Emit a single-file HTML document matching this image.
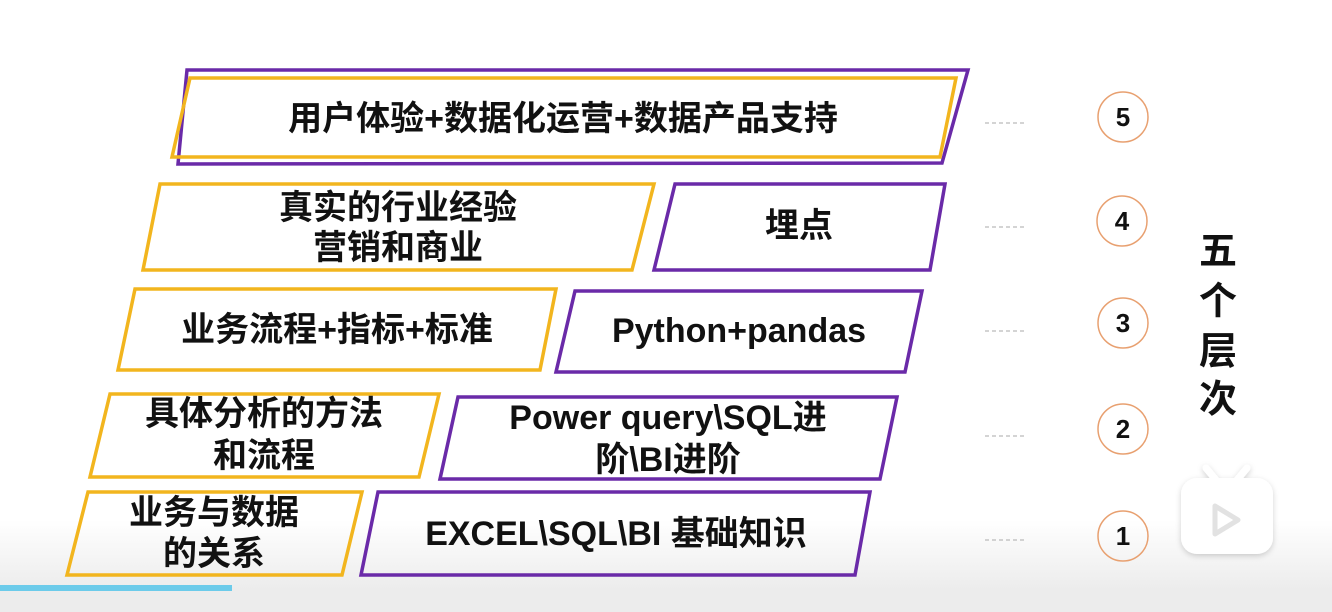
<!DOCTYPE html>
<html><head><meta charset="utf-8"><style>
html,body{margin:0;padding:0;width:1332px;height:612px;overflow:hidden;background:#fff}
svg{position:absolute;left:0;top:0}
text{font-family:"Liberation Sans","Noto Sans CJK SC",sans-serif;font-weight:bold;fill:#111}
</style></head><body>
<svg width="1332" height="612" viewBox="0 0 1332 612">
<defs><linearGradient id="bg" x1="0" y1="0" x2="0" y2="1"><stop offset="0" stop-color="#fff"/><stop offset="1" stop-color="#ececec"/></linearGradient>
<filter id="sh" x="-20%" y="-20%" width="140%" height="140%"><feDropShadow dx="0" dy="2" stdDeviation="3" flood-color="#000" flood-opacity="0.18"/></filter></defs>
<rect x="0" y="520" width="1332" height="70" fill="url(#bg)"/>
<rect x="0" y="590" width="1332" height="22" fill="#ececec"/>
<rect x="0" y="585" width="232" height="6" fill="#6ccbea"/>
<g fill="none" stroke-width="3.5">
<polygon points="187,70 968,70 942,163 178,164" stroke="#6a2aa8"/>
<polygon points="190,78 956,78 940,157 172,157" stroke="#f2b51e"/>
<polygon points="160,184 654,184 632,270 143,270" stroke="#f2b51e"/>
<polygon points="675,184 945,184 930,270 654,270" stroke="#6a2aa8"/>
<polygon points="135,289 556,289 540,370 118,370" stroke="#f2b51e"/>
<polygon points="575,291 922,291 905,372 556,372" stroke="#6a2aa8"/>
<polygon points="110,394 439,394 419,477 90,477" stroke="#f2b51e"/>
<polygon points="458,397 897,397 880,479 440,479" stroke="#6a2aa8"/>
<polygon points="88,492 362,492 342,575 67,575" stroke="#f2b51e"/>
<polygon points="378,492 870,492 855,575 361,575" stroke="#6a2aa8"/>
</g>
<g font-size="34" text-anchor="middle">
<text x="563" y="130">用户体验+数据化运营+数据产品支持</text>
<text x="398" y="219">真实的行业经验</text>
<text x="398" y="259">营销和商业</text>
<text x="799" y="237">埋点</text>
<text x="337" y="341">业务流程+指标+标准</text>
<text x="739" y="342">Python+pandas</text>
<text x="264" y="425">具体分析的方法</text>
<text x="264" y="467">和流程</text>
<text x="668" y="429">Power query\SQL进</text>
<text x="668" y="471">阶\BI进阶</text>
<text x="214" y="524">业务与数据</text>
<text x="214" y="565">的关系</text>
<text x="616" y="545">EXCEL\SQL\BI 基础知识</text>
</g>
<g stroke="#aaa" stroke-width="1" stroke-dasharray="4,3">
<line x1="985" y1="123" x2="1027" y2="123"/><line x1="985" y1="227" x2="1027" y2="227"/>
<line x1="985" y1="331" x2="1027" y2="331"/><line x1="985" y1="436" x2="1027" y2="436"/>
<line x1="985" y1="540" x2="1027" y2="540"/>
</g>
<g fill="none" stroke="#e8a070" stroke-width="1.5">
<circle cx="1123" cy="117" r="25"/><circle cx="1122" cy="221" r="25"/>
<circle cx="1123" cy="323" r="25"/><circle cx="1123" cy="429" r="25"/>
<circle cx="1123" cy="536" r="25"/>
</g>
<g font-size="26" text-anchor="middle">
<text x="1123" y="126">5</text><text x="1122" y="230">4</text><text x="1123" y="332">3</text>
<text x="1123" y="438">2</text><text x="1123" y="545">1</text>
</g>
<g font-size="38" text-anchor="middle">
<text x="1218" y="264">五</text><text x="1218" y="314">个</text>
<text x="1218" y="364">层</text><text x="1218" y="412">次</text>
</g>
<g filter="url(#sh)">
<line x1="1206" y1="468" x2="1216" y2="480" stroke="#fff" stroke-width="7" stroke-linecap="round"/>
<line x1="1247" y1="468" x2="1237" y2="480" stroke="#fff" stroke-width="7" stroke-linecap="round"/>
<rect x="1181" y="478" width="92" height="76" rx="16" fill="#fff"/>
</g>
<path d="M1215 506 L1238 520 L1215 534 Z" fill="#fff" stroke="#e2e2e2" stroke-width="5" stroke-linejoin="round"/>
</svg>
</body></html>
